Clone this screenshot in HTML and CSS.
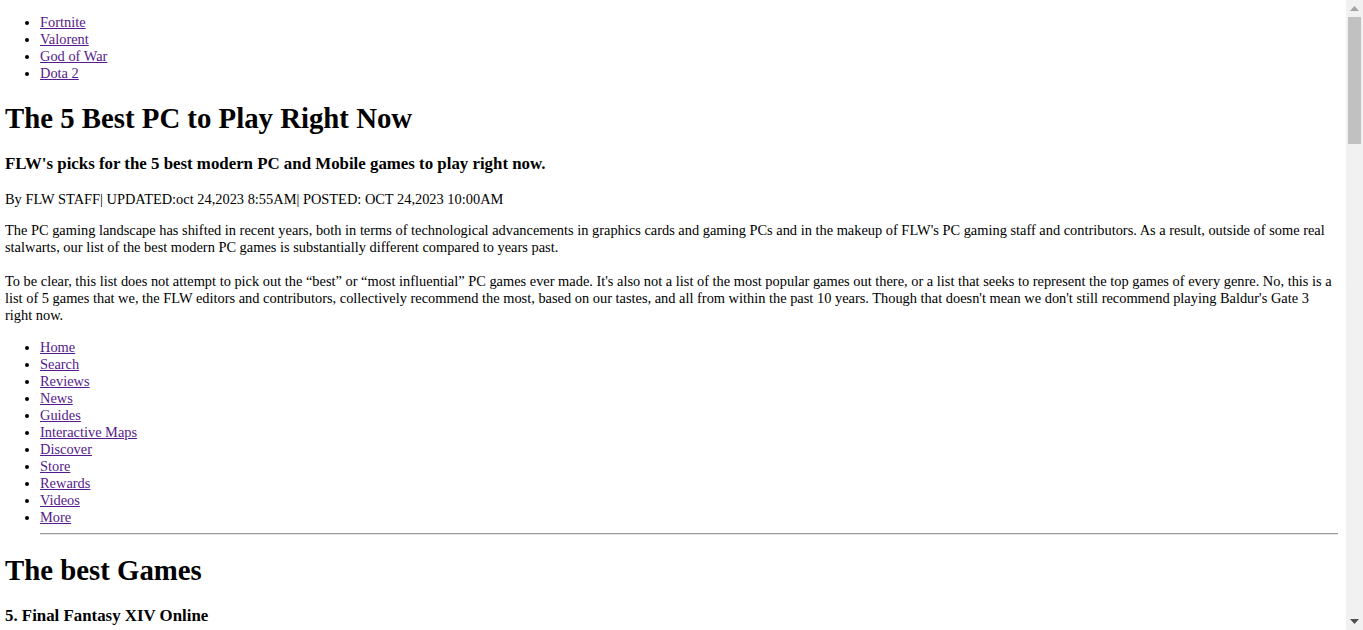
FILE: index.html
```html
<!DOCTYPE html>
<html lang="en">
<head>
<meta charset="utf-8">
<title>The 5 Best PC to Play Right Now</title>
<link rel="stylesheet" href="styles.css">
</head>
<body class="page">
<ul class="list">
  <li><a class="link" href="#">Fortnite</a></li>
  <li><a class="link" href="#">Valorent</a></li>
  <li><a class="link" href="#">God of War</a></li>
  <li><a class="link" href="#">Dota 2</a></li>
</ul>
<h1 class="title">The 5 Best PC to Play Right Now</h1>
<h3 class="subtitle">FLW's picks for the 5 best modern PC and Mobile games to play right now.</h3>
<p class="text">By FLW STAFF| UPDATED:oct 24,2023 8:55AM| POSTED: OCT 24,2023 10:00AM</p>
<p class="text">The PC gaming landscape has shifted in recent years, both in terms of technological advancements in graphics cards and gaming PCs and in the makeup of FLW's PC gaming staff and contributors. As a result, outside of some real stalwarts, our list of the best modern PC games is substantially different compared to years past.<br><br>To be clear, this list does not attempt to pick out the “best” or “most influential” PC games ever made. It's also not a list of the most popular games out there, or a list that seeks to represent the top games of every genre. No, this is a list of 5 games that we, the FLW editors and contributors, collectively recommend the most, based on our tastes, and all from within the past 10 years. Though that doesn't mean we don't still recommend playing Baldur's Gate 3 right now.</p>
<ul class="list">
  <li><a class="link" href="#">Home</a></li>
  <li><a class="link" href="#">Search</a></li>
  <li><a class="link" href="#">Reviews</a></li>
  <li><a class="link" href="#">News</a></li>
  <li><a class="link" href="#">Guides</a></li>
  <li><a class="link" href="#">Interactive Maps</a></li>
  <li><a class="link" href="#">Discover</a></li>
  <li><a class="link" href="#">Store</a></li>
  <li><a class="link" href="#">Rewards</a></li>
  <li><a class="link" href="#">Videos</a></li>
  <li><a class="link" href="#">More</a></li>
  <hr class="rule">
</ul>
<h1 class="title">The best Games</h1>
<div class="games">
  <h3 class="subtitle">5. Final Fantasy XIV Online</h3>
  <p class="text">Final Fantasy XIV Online is a massively multiplayer online role-playing game with a sprawling story, memorable characters and a community that keeps growing with every expansion.</p>
  <h3 class="subtitle">4. Valorant</h3>
  <p class="text">Valorant is a tactical team shooter where precise gunplay meets unique agent abilities.</p>
  <h3 class="subtitle">3. Dota 2</h3>
  <p class="text">Dota 2 remains one of the deepest competitive strategy games ever made.</p>
  <h3 class="subtitle">2. God of War</h3>
  <p class="text">God of War reinvents Kratos for a new era with a heartfelt story and brutal combat.</p>
  <h3 class="subtitle">1. Fortnite</h3>
  <p class="text">Fortnite keeps reinventing itself season after season, and it is still a blast to play with friends.</p>
</div>
<div class="scrollbar" aria-hidden="true">
  <div class="sb-btn">
    <svg width="9" height="5" viewBox="0 0 9 5"><path d="M0 5 L4.5 0 L9 5 Z" fill="#a3a3a3"/></svg>
  </div>
  <div class="sb-track"><div class="sb-thumb"></div></div>
  <div class="sb-btn">
    <svg width="9" height="5" viewBox="0 0 9 5"><path d="M0 0 L9 0 L4.5 5 Z" fill="#505050"/></svg>
  </div>
</div>
</body>
</html>
```
FILE: styles.css
```css
.page {
  margin: 0 25px 8px 5px;
  font-family: "Liberation Serif", "Times New Roman", serif;
  font-size: 14.4px;
  line-height: 17px;
  color: #000;
  background: #fff;
}

.list {
  margin: 14.4px 0;
  padding-left: 35px;
  list-style: disc;
}

.link {
  color: #551a8b;
  text-decoration: underline;
}

.title {
  font-size: 28.8px;
  line-height: normal;
  font-weight: bold;
  margin: 19.3px 0;
}

.subtitle {
  font-size: 16.85px;
  line-height: normal;
  font-weight: bold;
  margin: 16.85px 0;
}

.text {
  margin: 14.4px 0;
}

.rule {
  margin: 7.2px auto;
  height: 0;
  border: 0;
  border-top: 1px solid #9c9c9c;
  border-bottom: 1px solid #e6e6e6;
}

.games {
  min-height: 2360px;
}

.scrollbar {
  position: fixed;
  top: 0;
  right: 0;
  width: 17px;
  height: 100vh;
  background: #f1f1f1;
  display: flex;
  flex-direction: column;
}

.sb-btn {
  height: 17px;
  display: flex;
  align-items: center;
  justify-content: center;
  flex: none;
}

.sb-track {
  flex: 1;
  padding: 0 2px;
}

.sb-thumb {
  height: 127px;
  background: #c1c1c1;
}
```
